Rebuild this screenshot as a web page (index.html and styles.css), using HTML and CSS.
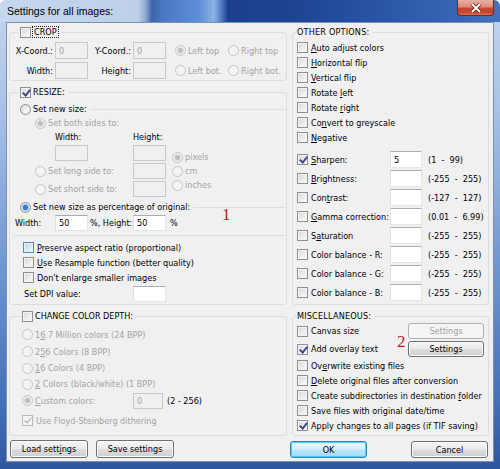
FILE: index.html
```html
<html>
	<head>
		<link rel="stylesheet" href="styles.css">
	</head>
	<body>
		<div class="window">
			<div class="titlebar">
				<span class="title">Settings for all images:</span>
				<span class="close">
					<svg width="12" height="10" viewBox="0 0 12 10"><path d="M2 1 L10 9 M10 1 L2 9" stroke="#5a2218" stroke-width="3.4" fill="none"/><path d="M2 1 L10 9 M10 1 L2 9" stroke="#fff" stroke-width="1.8" fill="none"/></svg>
				</span>
			</div>
			<div class="client">
				<div class="col left">
					<div class="group crop">
						<div class="legend"><span class="cb"></span><span class="focus">CROP</span></div>
						<div class="crop-grid">
							<span class="lbl">X-Coord.:</span><span class="edit dis">0</span>
							<span class="lbl">Y-Coord.:</span><span class="edit dis">0</span>
							<span class="opt dis"><span class="rb on dis"></span>Left top</span>
							<span class="opt dis"><span class="rb dis"></span>Right top</span>
							<span class="lbl">Width:</span><span class="edit dis"></span>
							<span class="lbl">Height:</span><span class="edit dis"></span>
							<span class="opt dis"><span class="rb dis"></span>Left bot.</span>
							<span class="opt dis"><span class="rb dis"></span>Right bot.</span>
						</div>
					</div>

					<div class="group resize">
						<div class="legend"><span class="cb on"></span><span>RESIZE:</span></div>
						<div class="subhead"><span class="rb"></span><span>Set new size:</span><span class="rule"></span></div>
						<div class="size-grid">
							<span class="opt dis both"><span class="rb on dis"></span>Set both sides to:</span>
							<span class="lbl-w c1">Width:</span><span class="c2">Height:</span>
							<span class="edit dis w-edit c1"></span><span class="edit dis c2"></span>
							<div class="units">
								<span class="opt dis"><span class="rb on dis"></span>pixels</span>
								<span class="opt dis"><span class="rb dis"></span>cm</span>
								<span class="opt dis"><span class="rb dis"></span>inches</span>
							</div>
							<span class="opt dis c1"><span class="rb dis"></span>Set long side to:</span><span class="edit dis c2"></span>
							<span class="opt dis c1"><span class="rb dis"></span>Set short side to:</span><span class="edit dis c2"></span>
						</div>
						<div class="subhead pct"><span class="rb on"></span><span>Set new size as percentage of original:</span><span class="rule"></span></div>
						<div class="pct-row">
							<span class="pct-w">Width:</span><span class="edit">50</span>
							<span class="pct-h">%, Height:</span><span class="edit">50</span>
							<span class="pct-p">%</span>
						</div>
						<div class="sep"></div>
						<div class="checks">
							<div class="crow"><span class="cb hot"></span><span><u>P</u>reserve aspect ratio (proportional)</span></div>
							<div class="crow"><span class="cb"></span><span><u>U</u>se Resample function (better quality)</span></div>
							<div class="crow"><span class="cb"></span><span>Don't enlarge smaller images</span></div>
						</div>
						<div class="dpi-row"><span class="dpi-lbl">Set DPI value:</span><span class="edit"></span></div>
					</div>

					<div class="group depth">
						<div class="legend"><span class="cb"></span><span>CHANGE COLOR DEPTH:</span></div>
						<div class="depth-list">
							<div class="drow r17"><span class="opt dis"><span class="rb dis"></span><span>1<u>6</u>.7 Million colors (24 BPP)</span></span></div>
							<div class="drow r17"><span class="opt dis"><span class="rb dis"></span><span>2<u>5</u>6 Colors (8 BPP)</span></span></div>
							<div class="drow"><span class="opt dis"><span class="rb dis"></span><span><u>1</u>6 Colors (4 BPP)</span></span></div>
							<div class="drow"><span class="opt dis"><span class="rb dis"></span><span><u>2</u> Colors (black/white) (1 BPP)</span></span></div>
							<div class="drow r17"><span class="opt dis custom"><span class="rb on dis"></span><span><u>C</u>ustom colors:</span></span><span class="edit dis narrow">0</span><span class="range-l">(2 - 256)</span></div>
						</div>
						<div class="crow dis dither"><span class="cb on dis"></span><span>Use Floyd-Steinberg dithering</span></div>
					</div>

					<div class="btn-row">
						<span class="btn"><span>Load sett<u>i</u>ngs</span></span>
						<span class="btn">Save settings</span>
					</div>
				</div>

				<div class="col right">
					<div class="group other">
						<div class="legend text">OTHER OPTIONS:</div>
						<div class="checks top">
							<div class="crow"><span class="cb"></span><span><u>A</u>uto adjust colors</span></div>
							<div class="crow"><span class="cb"></span><span><u>H</u>orizontal flip</span></div>
							<div class="crow"><span class="cb"></span><span><u>V</u>ertical flip</span></div>
							<div class="crow"><span class="cb"></span><span>Rotate <u>l</u>eft</span></div>
							<div class="crow"><span class="cb"></span><span>Rotate <u>r</u>ight</span></div>
							<div class="crow"><span class="cb"></span><span>Co<u>n</u>vert to greyscale</span></div>
							<div class="crow"><span class="cb"></span><span><u>N</u>egative</span></div>
						</div>
						<div class="values">
							<div class="vrow"><span class="cb on"></span><span class="vlabel"><u>S</u>harpen:</span><span class="edit">5</span><span class="range">(1 &nbsp;- &nbsp;99)</span></div>
							<div class="vrow"><span class="cb"></span><span class="vlabel"><u>B</u>rightness:</span><span class="edit"></span><span class="range">(-255 &nbsp;- &nbsp;255)</span></div>
							<div class="vrow"><span class="cb"></span><span class="vlabel">Con<u>t</u>rast:</span><span class="edit"></span><span class="range">(-127 &nbsp;- &nbsp;127)</span></div>
							<div class="vrow"><span class="cb"></span><span class="vlabel"><u>G</u>amma correction:</span><span class="edit"></span><span class="range">(0.01 &nbsp;- &nbsp;6.99)</span></div>
							<div class="vrow"><span class="cb"></span><span class="vlabel">S<u>a</u>turation</span><span class="edit"></span><span class="range">(-255 &nbsp;- &nbsp;255)</span></div>
							<div class="vrow"><span class="cb"></span><span class="vlabel">Color balance - R:</span><span class="edit"></span><span class="range">(-255 &nbsp;- &nbsp;255)</span></div>
							<div class="vrow"><span class="cb"></span><span class="vlabel">Color balance - G:</span><span class="edit"></span><span class="range">(-255 &nbsp;- &nbsp;255)</span></div>
							<div class="vrow"><span class="cb"></span><span class="vlabel">Color balance - B:</span><span class="edit"></span><span class="range">(-255 &nbsp;- &nbsp;255)</span></div>
						</div>
					</div>

					<div class="group misc">
						<div class="legend text">MISCELLANEOUS:</div>
						<div class="brow"><span class="cb"></span><span>Canvas size</span><span class="btn small dis">Settings</span></div>
						<div class="brow"><span class="cb on"></span><span>Add overlay text</span><span class="btn small">Settings</span></div>
						<div class="checks">
							<div class="crow"><span class="cb"></span><span>Ov<u>e</u>rwrite existing files</span></div>
							<div class="crow"><span class="cb"></span><span><u>D</u>elete original files after conversion</span></div>
							<div class="crow"><span class="cb"></span><span>Create subdirectories in destination <u>f</u>older</span></div>
							<div class="crow"><span class="cb"></span><span>Save files with original date/time</span></div>
							<div class="crow"><span class="cb on"></span><span>Apply changes to all pages (if TIF saving)</span></div>
						</div>
					</div>

					<div class="btn-row ok-row">
						<span class="btn default">OK</span>
						<span class="btn">Cancel</span>
					</div>
				</div>
			</div>
			<span class="note one">1</span>
			<span class="note two">2</span>
		</div>
	</body>
</html>
```

FILE: styles.css
```css
*{
	box-sizing: border-box;
}
body{
	margin: 0;
	font-family: "DejaVu Sans Condensed", "DejaVu Sans", sans-serif;
	font-stretch: condensed;
	font-size: 9px;
	color: #000;
}
u{
	text-decoration: underline;
	text-underline-offset: 1px;
}

/* window frame */
.window{
	position: relative;
	width: 500px;
	height: 469px;
	display: flex;
	flex-direction: column;
	border-radius: 6px 6px 0 0;
	overflow: hidden;
	background: linear-gradient(180deg, #c3d6ee 0%, #aac4e7 22%, #7399d2 55%, #4670b8 85%, #2f57a0 100%);
}
.titlebar{
	height: 22px;
	flex: none;
	display: flex;
	align-items: flex-start;
	background: linear-gradient(90deg, #c6d8ee 0, #bcd0ea 138px, #8aa6d0 146px, #3e63a6 152px, #4a78c2 162px, #5f8fd6 200px, #8eb4e6 214px, #5a84c8 220px, #1d3f8e 228px, #1f4494 300px, #2a55a6 380px, #3866b4 460px, #4572bb 500px);
}
.title{
	font-family: "Liberation Sans", sans-serif;
	font-stretch: normal;
	font-size: 10.5px;
	margin: 5px 0 0 7px;
	color: #000;
}
.close{
	margin-left: auto;
	margin-right: 6px;
	width: 37px;
	height: 16px;
	display: flex;
	align-items: center;
	justify-content: center;
	border: 1px solid #6e2b20;
	border-top: none;
	border-radius: 0 0 4px 4px;
	background: linear-gradient(180deg, #e9b0a5 0%, #dc8a7a 45%, #c84a33 55%, #c4432c 80%, #d8715c 100%);
}

/* client area */
.client{
	height: 440px;
	margin: 0 6px;
	border: 1px solid #7b8fae;
	background: #f0f0f0;
	display: flex;
	gap: 5px;
	padding: 9px 4px 0 2px;
}
.col{
	display: flex;
	flex-direction: column;
}
.col.left{
	width: 278px;
}
.col.right{
	width: 197px;
}

.group{
	border: 1px solid #d5dfe5;
	border-radius: 3px;
	display: flex;
	flex-direction: column;
}
.legend{
	display: flex;
	align-items: center;
	align-self: flex-start;
	height: 12px;
	margin: -7px 0 0 9px;
	padding: 0 3px 0 1px;
	background: #f0f0f0;
}
.legend .cb{
	margin-right: 2px;
}
.legend.text{
	margin-left: 3px;
	letter-spacing: 0.2px;
}
.focus{
	outline: 1px dotted #222;
	outline-offset: 0;
	padding: 0 1px;
	line-height: 10px;
}

/* checkboxes and radios */
.cb{
	display: inline-block;
	flex: none;
	position: relative;
	width: 11px;
	height: 11px;
	border: 1px solid #8e8f8f;
	background: linear-gradient(135deg, #d2d4d6 0%, #ebecec 55%, #fbfbfb 100%);
	box-shadow: inset 0 0 0 1px #f4f4f4;
}
.cb.on::after{
	content: "";
	position: absolute;
	left: 3px;
	top: 0px;
	width: 3px;
	height: 6px;
	border: solid #3b4f8c;
	border-width: 0 2px 2px 0;
	transform: rotate(40deg);
}
.cb.hot{
	border-color: #4f8fc7;
	background: linear-gradient(135deg, #b6d6f0 0%, #d7eaf8 55%, #f0f8fe 100%);
	box-shadow: inset 0 0 0 1px #e6f3fd;
}
.cb.dis{
	border-color: #b8b8b8;
	background: #f4f4f4;
	box-shadow: none;
}
.cb.dis::after{
	border-color: #a8a8a8;
	border-width: 0 1px 1px 0;
}
.rb{
	display: inline-block;
	flex: none;
	width: 11px;
	height: 11px;
	border-radius: 50%;
	border: 1px solid #8e8f8f;
	background: radial-gradient(circle at 60% 65%, #fbfbfb 0%, #e4e5e6 60%, #cfd1d3 100%);
}
.rb.on{
	background: radial-gradient(circle, #2a73b6 0%, #3f84c2 2.2px, #b8d3ea 3.3px, #eef3f8 4.4px);
}
.rb.dis{
	border-color: #c4c4c4;
	background: #f4f4f4;
}
.rb.on.dis{
	background: radial-gradient(circle, #b8b8b8 0%, #c4c4c4 2.2px, #e8e8e8 3.3px, #f4f4f4 4.4px);
}
.opt{
	display: flex;
	align-items: center;
	white-space: nowrap;
}
.opt .rb{
	margin-right: 2px;
}
.dis{
	color: #a3a3a3;
}

/* text boxes */
.edit{
	display: flex;
	align-items: center;
	width: 33px;
	height: 16px;
	padding-left: 3px;
	background: #fff;
	border: 1px solid #e2e6ea;
	border-top-color: #abadb3;
	border-left-color: #dbdfe6;
}
.edit.dis{
	background: #f0f0f0;
	border-color: #c9c9c9;
	color: #a3a3a3;
}

/* crop */
.crop{
	height: 49px;
}
.crop-grid{
	display: grid;
	grid-template-columns: 43px 33px 41px 33px 58px auto;
	grid-template-rows: 17px 17px;
	column-gap: 2px;
	row-gap: 3px;
	margin-top: 4px;
	align-items: center;
}
.crop-grid .edit{
	height: 17px;
}
.crop-grid .opt:nth-child(5), .crop-grid .opt:nth-child(11){
	padding-left: 7px;
}
.lbl{
	text-align: right;
}

/* resize */
.resize{
	height: 213px;
	margin-top: 11px;
}
.subhead{
	display: flex;
	align-items: center;
	height: 12px;
	margin-top: 5px;
	padding-left: 10px;
}
.subhead .rb{
	margin-right: 2px;
}
.subhead .rule{
	flex: 1;
	border-top: 1px solid #d5dfe5;
	margin-left: 3px;
}
.size-grid{
	display: grid;
	grid-template-columns: 98px 33px auto;
	grid-template-rows: 12px 12px 16px 16px 16px;
	row-gap: 2px;
	margin-top: 2px;
	padding-left: 25px;
	align-items: center;
}
.size-grid .both{
	grid-row: 1;
	grid-column: 1 / 3;
}
.size-grid .c1{
	grid-column: 1;
}
.size-grid .c2{
	grid-column: 2;
}
.lbl-w{
	padding-left: 20px;
}
.size-grid .w-edit{
	margin-left: 20px;
}
.units{
	grid-column: 3;
	grid-row: 3 / 6;
	align-self: start;
	display: flex;
	flex-direction: column;
	gap: 2px;
	margin: 6px 0 0 6px;
}
.units .opt{
	height: 12px;
}
.subhead.pct{
	margin-top: 4px;
}
.pct-row{
	display: flex;
	align-items: center;
	height: 16px;
	margin-top: 2px;
	padding-left: 5px;
}
.pct-w{
	width: 40px;
}
.pct-h{
	width: 45px;
	padding-left: 2px;
}
.pct-p{
	margin-left: 4px;
}
.sep{
	border-top: 1px solid #d5dfe5;
	margin: 4px 0 0 4px;
}
.checks{
	display: flex;
	flex-direction: column;
	margin-top: 4px;
	padding-left: 13px;
}
.crow{
	display: flex;
	align-items: center;
	height: 15px;
	white-space: nowrap;
}
.crow .cb{
	margin-right: 3px;
}
.dpi-row{
	display: flex;
	align-items: center;
	height: 16px;
	margin-top: 1px;
	padding-left: 14px;
}
.dpi-lbl{
	width: 109px;
}

/* color depth */
.depth{
	height: 120px;
	margin-top: 11px;
}
.depth .legend{
	margin-left: 11px;
}
.depth-list{
	display: flex;
	flex-direction: column;
	margin-top: 4px;
	padding-left: 12px;
}
.drow{
	display: flex;
	align-items: center;
	height: 16px;
}
.drow.r17{
	height: 17px;
}
.custom{
	width: 111px;
}
.edit.narrow{
	width: 30px;
}
.range-l{
	margin-left: 4px;
}
.dither{
	margin: 4px 0 0 12px;
}

/* buttons */
.btn-row{
	display: flex;
	gap: 8px;
	margin: 4px 0 0 1px;
}
.btn{
	display: flex;
	align-items: center;
	justify-content: center;
	width: 78px;
	height: 18px;
	border: 1px solid #707070;
	border-radius: 3px;
	background: linear-gradient(180deg, #f4f4f4 0%, #ebebeb 48%, #dddddd 52%, #cfcfcf 100%);
	box-shadow: inset 0 0 0 1px #fbfbfb;
}
.btn.default{
	border-color: #3c7fb1;
	background: linear-gradient(180deg, #eaf6fd 0%, #d9effc 48%, #bee6fd 52%, #a7d9f5 100%);
	box-shadow: inset 0 0 0 1px #48d3fb;
}
.btn.dis{
	border-color: #adb2b5;
	background: #f4f4f4;
	box-shadow: none;
	color: #a3a3a3;
}
.ok-row{
	justify-content: space-between;
	margin: 5px 1px 0 -2px;
}
.ok-row .btn{
	width: 77px;
	height: 17px;
}

/* right column */
.other{
	height: 273px;
}
.checks.top{
	margin-top: 2px;
	padding-left: 4px;
}
.values{
	display: flex;
	flex-direction: column;
	margin-top: 5px;
	padding-left: 4px;
}
.vrow{
	display: flex;
	align-items: center;
	height: 19px;
}
.vlabel{
	width: 82px;
	padding-left: 3px;
}
.vrow .edit{
	width: 32px;
	height: 17px;
}
.range{
	margin-left: 6px;
	white-space: nowrap;
}
.misc{
	height: 120px;
	margin-top: 11px;
}
.brow{
	display: flex;
	align-items: center;
	height: 18px;
	padding-left: 4px;
}
.brow .cb{
	margin-right: 3px;
}
.btn.small{
	width: 76px;
	height: 16px;
	margin: 0 4px 0 auto;
}
.misc .checks{
	margin-top: 0;
	padding-left: 4px;
}

/* annotations on the picture */
.note{
	position: absolute;
	font-family: "Liberation Serif", serif;
	font-stretch: normal;
	font-size: 17px;
	color: #c8161d;
}
.note.one{
	left: 222px;
	top: 205px;
}
.note.two{
	left: 397px;
	top: 332px;
}
```
